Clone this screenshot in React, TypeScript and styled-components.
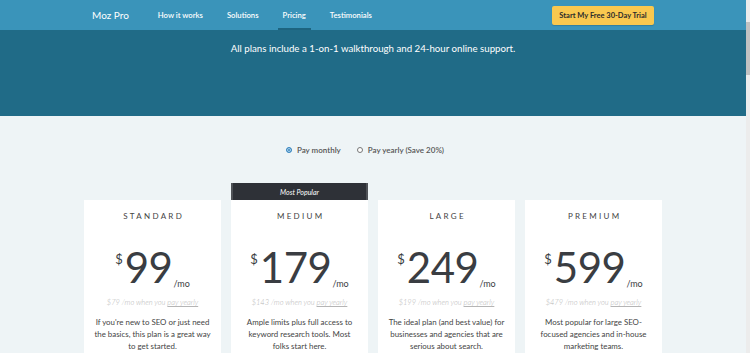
import React from "react";
import styled, { createGlobalStyle, css } from "styled-components";

const GlobalStyle = createGlobalStyle`
  html, body { margin: 0; padding: 0; overflow: hidden; }
  body { font-family: Lato, "Open Sans", Arial, sans-serif; background: #eef4f6; }
  * { box-sizing: border-box; }
`;

const Page = styled.div`
  display: flex;
  width: 750px;
  height: 353px;
  overflow: hidden;
`;

const Main = styled.div`
  flex: 1;
  display: flex;
  flex-direction: column;
  background: #eef4f6;
  min-width: 0;
  & > * {
    flex-shrink: 0;
  }
`;

const ScrollTrack = styled.div`
  width: 4px;
  background: #ececec;
  display: flex;
  flex-direction: column;
  padding-top: 22px;
`;

const ScrollThumb = styled.div`
  height: 53px;
  background: #c2c2c2;
`;

const Nav = styled.nav`
  height: 30px;
  background: #3a94ba;
  display: flex;
  justify-content: center;
`;

const NavInner = styled.div`
  width: 562px;
  display: flex;
  align-items: stretch;
`;

const Brand = styled.div`
  color: #fff;
  font-size: 10px;
  display: flex;
  align-items: center;
  margin-right: 24px;
`;

const NavLink = styled.a<{ $active?: boolean }>`
  color: #fff;
  font-size: 7.7px;
  font-weight: 600;
  text-decoration: none;
  display: flex;
  align-items: center;
  padding: 2px 5px 0;
  margin-right: 14px;
  border-bottom: 2px solid transparent;
  ${(p) =>
    p.$active &&
    css`
      border-bottom-color: #1d6480;
    `}
`;

const Spacer = styled.div`
  flex: 1;
`;

const TrialButton = styled.button`
  align-self: center;
  margin-top: 1px;
  height: 19px;
  width: 102px;
  border: none;
  border-radius: 2px;
  background: #f9c84f;
  color: #2b2b2b;
  font-family: inherit;
  font-size: 7.5px;
  font-weight: 700;
  padding: 0;
  box-shadow: 0 1px 1px rgba(0, 0, 0, 0.15);
`;

const Hero = styled.header`
  height: 86px;
  background: #206b87;
  display: flex;
  justify-content: center;
  padding-top: 12px;
`;

const Subtitle = styled.p`
  margin: 0;
  color: #fff;
  font-size: 9.7px;
  line-height: 13px;
`;

const Content = styled.section`
  display: flex;
  flex-direction: column;
  align-items: center;
  padding-top: 28px;
`;

const Toggle = styled.div`
  display: flex;
  gap: 16px;
  margin-left: -16px;
  height: 12px;
  align-items: center;
`;

const RadioLabel = styled.label`
  display: flex;
  align-items: center;
  gap: 5px;
  font-size: 8px;
  font-weight: 600;
  color: #555;
`;

const RadioDot = styled.span<{ $checked?: boolean }>`
  width: 6px;
  height: 6px;
  border-radius: 50%;
  border: 1px solid ${(p) => (p.$checked ? "#3a87c0" : "#777")};
  background: ${(p) => (p.$checked ? "#3a87c0" : "#fff")};
  box-shadow: ${(p) => (p.$checked ? "inset 0 0 0 1px #bfdcf0" : "none")};
`;

const Cards = styled.div`
  display: flex;
  gap: 10px;
  margin-top: 27px;
  align-items: flex-start;
`;

const CardWrap = styled.div<{ $popular?: boolean }>`
  width: 137px;
  display: flex;
  flex-direction: column;
  margin-top: ${(p) => (p.$popular ? "0" : "17px")};
  ${(p) =>
    p.$popular &&
    css`
      border: 2px solid #4f5257;
      border-top: none;
    `}
`;

const Badge = styled.div`
  height: 17px;
  background: #2e3137;
  color: #fff;
  font-size: 7px;
  font-style: italic;
  display: flex;
  align-items: center;
  justify-content: center;
  padding-top: 1px;
`;

const Card = styled.div<{ $popular?: boolean }>`
  background: #fff;
  height: 160px;
  display: flex;
  flex-direction: column;
  align-items: center;
  padding-top: 10px;
  margin: ${(p) => (p.$popular ? "0 -2px" : "0")};
`;

const PlanName = styled.div`
  font-size: 8px;
  letter-spacing: 2.3px;
  color: #444;
  line-height: 12px;
  padding-left: 2.3px;
`;

const PriceRow = styled.div`
  display: flex;
  align-items: flex-start;
  margin-top: 22px;
  color: #3a3d42;
  height: 46px;
`;

const Currency = styled.span`
  font-size: 13px;
  font-weight: 400;
  margin-top: 7px;
  margin-right: 2px;
`;

const Amount = styled.span`
  font-size: 42px;
  font-weight: 400;
  line-height: 46px;
  letter-spacing: -0.5px;
`;

const PerMonth = styled.span`
  font-size: 9px;
  font-weight: 400;
  align-self: flex-end;
  margin-bottom: 1px;
  margin-left: 1px;
`;

const Yearly = styled.div`
  margin-top: 8px;
  font-size: 7.5px;
  font-style: italic;
  font-weight: 300;
  color: #b5b5b5;
  line-height: 10px;
`;

const YearlyLink = styled.span`
  text-decoration: underline;
`;

const Description = styled.p`
  margin: 8px 0 0;
  padding: 0 9.5px;
  font-size: 7.9px;
  line-height: 12px;
  color: #444;
  text-align: center;
`;

type Plan = {
  name: string;
  price: string;
  yearly: string;
  desc: string;
  popular?: boolean;
};

const plans: Plan[] = [
  {
    name: "STANDARD",
    price: "99",
    yearly: "$79",
    desc: "If you're new to SEO or just need the basics, this plan is a great way to get started.",
  },
  {
    name: "MEDIUM",
    price: "179",
    yearly: "$143",
    desc: "Ample limits plus full access to keyword research tools. Most folks start here.",
    popular: true,
  },
  {
    name: "LARGE",
    price: "249",
    yearly: "$199",
    desc: "The ideal plan (and best value) for businesses and agencies that are serious about search.",
  },
  {
    name: "PREMIUM",
    price: "599",
    yearly: "$479",
    desc: "Most popular for large SEO-focused agencies and in-house marketing teams.",
  },
];

export default function App() {
  return (
    <>
      <GlobalStyle />
      <Page>
        <Main>
          <Nav>
            <NavInner>
              <Brand>Moz Pro</Brand>
              <NavLink>How it works</NavLink>
              <NavLink>Solutions</NavLink>
              <NavLink $active>Pricing</NavLink>
              <NavLink>Testimonials</NavLink>
              <Spacer />
              <TrialButton>Start My Free 30-Day Trial</TrialButton>
            </NavInner>
          </Nav>
          <Hero>
            <Subtitle>All plans include a 1-on-1 walkthrough and 24-hour online support.</Subtitle>
          </Hero>
          <Content>
            <Toggle>
              <RadioLabel>
                <RadioDot $checked />
                Pay monthly
              </RadioLabel>
              <RadioLabel>
                <RadioDot />
                Pay yearly (Save 20%)
              </RadioLabel>
            </Toggle>
            <Cards>
              {plans.map((p) => (
                <CardWrap key={p.name} $popular={p.popular}>
                  {p.popular && <Badge>Most Popular</Badge>}
                  <Card $popular={p.popular}>
                    <PlanName>{p.name}</PlanName>
                    <PriceRow>
                      <Currency>$</Currency>
                      <Amount>{p.price}</Amount>
                      <PerMonth>/mo</PerMonth>
                    </PriceRow>
                    <Yearly>
                      {p.yearly} /mo when you <YearlyLink>pay yearly</YearlyLink>
                    </Yearly>
                    <Description>{p.desc}</Description>
                  </Card>
                </CardWrap>
              ))}
            </Cards>
          </Content>
        </Main>
        <ScrollTrack>
          <ScrollThumb />
        </ScrollTrack>
      </Page>
    </>
  );
}
